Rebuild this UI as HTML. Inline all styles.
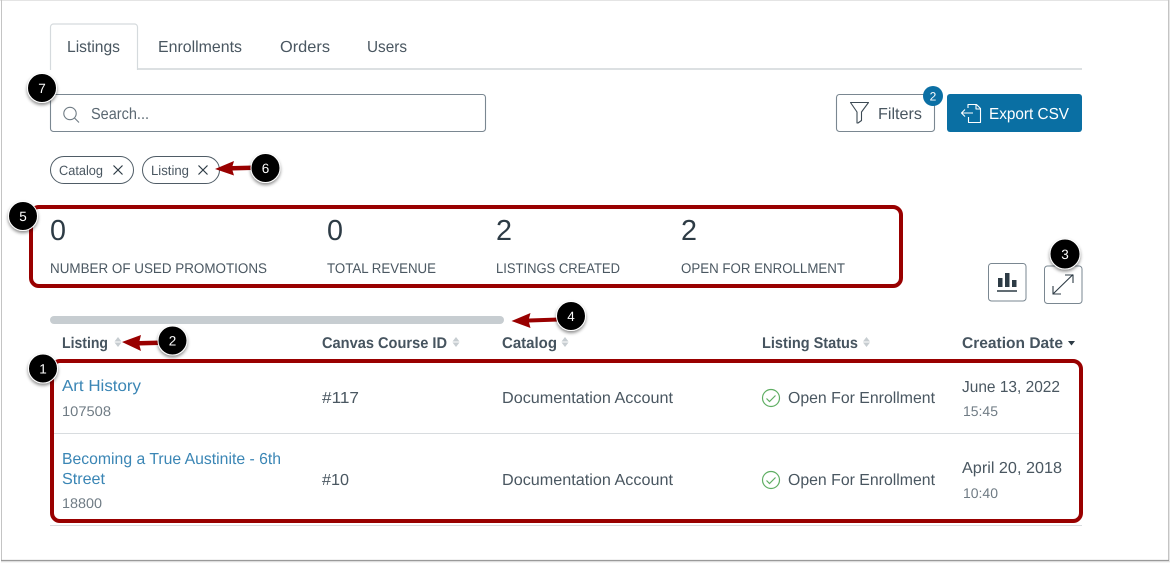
<!DOCTYPE html>
<html lang="en"><head><meta charset="utf-8"><title>Listings</title>
<style>
html,body{margin:0;padding:0;background:#fff;width:1170px;height:563px;overflow:hidden}
svg{display:block;font-family:"Liberation Sans",sans-serif}
text{text-rendering:geometricPrecision}
.t{fill:#2d3b45}
.g{fill:#4a5761}
.m{fill:#6f7b84}
.l{fill:#3b86b5}
.b{font-weight:bold;fill:#46545f}
.n{fill:#fff;font-size:13.5px;text-anchor:middle}
.red{fill:none;stroke:#990000;stroke-width:4}
.ar{fill:#990000}
.s{fill:#c7cdd1}
</style></head><body>
<svg width="1170" height="563" viewBox="0 0 1170 563" xmlns="http://www.w3.org/2000/svg">
<defs><filter id="sh" x="-40%" y="-40%" width="180%" height="180%"><feDropShadow dx="0" dy="2" stdDeviation="1.5" flood-color="#000" flood-opacity=".45"/></filter></defs>
<rect width="1170" height="563" fill="#fff"/>
<!-- frame -->
<path d="M0 .5H1170" stroke="#e4e4e4" stroke-width="1"/>
<path d="M1.500 0V560.500H1168.500V0" fill="none" stroke="#c4c4c4" stroke-width="1"/>
<path d="M1 560.500H1169" stroke="#9a9a9a" stroke-width="1.300"/>
<path d="M1169.500 0V561" stroke="#e6e6e6" stroke-width="1"/>
<path d="M1 561.800H1170" stroke="#dcdcdc" stroke-width="1"/>

<!-- tabs -->
<path d="M50 69H1082" stroke="#c7cdd1" stroke-width="1.2"/>
<path d="M50.500 70V27a3 3 0 0 1 3-3h81a3 3 0 0 1 3 3v43" fill="#fff" stroke="#d5dadd" stroke-width="1.2"/>
<text x="67" y="52" font-size="16" class="g" textLength="53" lengthAdjust="spacingAndGlyphs">Listings</text>
<text x="158" y="52" font-size="16" class="g" textLength="84" lengthAdjust="spacingAndGlyphs">Enrollments</text>
<text x="280" y="52" font-size="16" class="g" textLength="50" lengthAdjust="spacingAndGlyphs">Orders</text>
<text x="367" y="52" font-size="16" class="g" textLength="40" lengthAdjust="spacingAndGlyphs">Users</text>

<!-- search -->
<rect x="50.500" y="94.500" width="435" height="37" rx="3" fill="#fff" stroke="#7a8791" stroke-width="1.1"/>
<circle cx="70" cy="113.500" r="6.200" fill="none" stroke="#6f7b84" stroke-width="1.1"/>
<path d="M74.500 118l4.500 4.500" stroke="#6f7b84" stroke-width="1.1"/>
<text x="91" y="119" font-size="16" fill="#5b6872" textLength="58" lengthAdjust="spacingAndGlyphs">Search...</text>

<!-- chips -->
<rect x="50.500" y="156.500" width="83" height="27" rx="13.500" fill="#fff" stroke="#4f5c66" stroke-width="1"/>
<text x="59" y="175" font-size="13.500" class="g" textLength="44" lengthAdjust="spacingAndGlyphs">Catalog</text>
<path d="M113.500 165.500l9 9m0-9l-9 9" stroke="#2d3b45" stroke-width="1.200" fill="none"/>
<rect x="142.500" y="156.500" width="77" height="27" rx="13.500" fill="#fff" stroke="#4f5c66" stroke-width="1"/>
<text x="151" y="175" font-size="13.500" class="g" textLength="38" lengthAdjust="spacingAndGlyphs">Listing</text>
<path d="M198.500 165.500l9 9m0-9l-9 9" stroke="#2d3b45" stroke-width="1.200" fill="none"/>

<!-- filters / export -->
<rect x="836.500" y="94.500" width="98" height="37" rx="3" fill="#fff" stroke="#7a8791" stroke-width="1.1"/>
<path d="M850.500 102.500h18l-7 9.500v8.500l-3.500 2.500h-1v-11z" fill="none" stroke="#3d4a54" stroke-width="1.100" stroke-linejoin="round"/>
<text x="878" y="119" font-size="16" class="g" textLength="44" lengthAdjust="spacingAndGlyphs">Filters</text>
<circle cx="933" cy="96" r="10" fill="#0b6fa4"/>
<text x="933" y="100.500" font-size="12" fill="#fff" text-anchor="middle">2</text>
<rect x="947" y="94" width="135" height="38" rx="3" fill="#0a6fa3"/>
<path d="M968 108v-3.500h8.500l4 4v14h-12v-5.500M980 109h-4v-4.500M973 113h-11.500M965 109.500l-3.500 3.500 3.500 3.500" fill="none" stroke="#fff" stroke-width="1.100" stroke-linejoin="round"/>
<text x="989" y="119" font-size="16" fill="#fff" textLength="80" lengthAdjust="spacingAndGlyphs">Export CSV</text>

<!-- stats -->
<text x="50" y="240" font-size="29" class="t" textLength="16" lengthAdjust="spacingAndGlyphs">0</text>
<text x="327" y="240" font-size="29" class="t" textLength="16" lengthAdjust="spacingAndGlyphs">0</text>
<text x="496" y="240" font-size="29" class="t" textLength="16" lengthAdjust="spacingAndGlyphs">2</text>
<text x="681" y="240" font-size="29" class="t" textLength="16" lengthAdjust="spacingAndGlyphs">2</text>
<text x="50" y="273" font-size="14" class="g" textLength="217" lengthAdjust="spacingAndGlyphs">NUMBER OF USED PROMOTIONS</text>
<text x="327" y="273" font-size="14" class="g" textLength="109" lengthAdjust="spacingAndGlyphs">TOTAL REVENUE</text>
<text x="496" y="273" font-size="14" class="g" textLength="124" lengthAdjust="spacingAndGlyphs">LISTINGS CREATED</text>
<text x="681" y="273" font-size="14" class="g" textLength="164" lengthAdjust="spacingAndGlyphs">OPEN FOR ENROLLMENT</text>

<!-- icon buttons -->
<rect x="988.500" y="263.500" width="37.500" height="37.500" rx="3" fill="#fff" stroke="#7a8791" stroke-width="1"/>
<path d="M998 278h4.500v9H998zM1005 273h4.500v14H1005zM1012 280h4.500v7H1012z" fill="#2d3b45"/>
<path d="M997 291h20" stroke="#2d3b45" stroke-width="1.400"/>
<rect x="1044.500" y="266" width="37.500" height="37.500" rx="3" fill="#fff" stroke="#7a8791" stroke-width="1"/>
<path d="M1053 294l20-19.500M1065 275h8v8M1053 286v8h8" fill="none" stroke="#2d3b45" stroke-width="1.100"/>

<!-- scrollbar -->
<rect x="50" y="316" width="454" height="8" rx="4" fill="#c7cdd1"/>

<!-- table header -->
<text x="62" y="348" font-size="15.500" class="b" textLength="46" lengthAdjust="spacingAndGlyphs">Listing</text>
<path class="s" d="M118 337l3.500 4.500h-7zM118 347l3.500-4.500h-7z"/>
<text x="322" y="348" font-size="15.500" class="b" textLength="125" lengthAdjust="spacingAndGlyphs">Canvas Course ID</text>
<path class="s" d="M456 337l3.500 4.500h-7zM456 347l3.500-4.500h-7z"/>
<text x="502" y="348" font-size="15.500" class="b" textLength="55" lengthAdjust="spacingAndGlyphs">Catalog</text>
<path class="s" d="M565 337l3.500 4.500h-7zM565 347l3.500-4.500h-7z"/>
<text x="762" y="348" font-size="15.500" class="b" textLength="96" lengthAdjust="spacingAndGlyphs">Listing Status</text>
<path class="s" d="M866.500 337l3.500 4.500h-7zM866.500 347l3.500-4.500h-7z"/>
<text x="962" y="348" font-size="15.500" class="b" textLength="101" lengthAdjust="spacingAndGlyphs">Creation Date</text>
<path d="M1068 341h7l-3.500 4.500z" fill="#2d3b45"/>

<!-- rows -->
<text x="62" y="391" font-size="16" class="l" textLength="79" lengthAdjust="spacingAndGlyphs">Art History</text>
<text x="62" y="416" font-size="14" class="m" textLength="49" lengthAdjust="spacingAndGlyphs">107508</text>
<text x="322" y="403" font-size="16" class="g" textLength="37" lengthAdjust="spacingAndGlyphs">#117</text>
<text x="502" y="403" font-size="16" class="g" textLength="171" lengthAdjust="spacingAndGlyphs">Documentation Account</text>
<circle cx="771" cy="398" r="8.500" fill="none" stroke="#5fae63" stroke-width="1.200"/>
<path d="M766.500 398.500l3 3 6-6" fill="none" stroke="#5fae63" stroke-width="1.200"/>
<text x="788" y="403" font-size="16" class="g" textLength="147" lengthAdjust="spacingAndGlyphs">Open For Enrollment</text>
<text x="962" y="392" font-size="16" class="g" textLength="98" lengthAdjust="spacingAndGlyphs">June 13, 2022</text>
<text x="963" y="416" font-size="14" class="m" textLength="35" lengthAdjust="spacingAndGlyphs">15:45</text>

<path d="M50 433.500H1082" stroke="#d8dcdf" stroke-width="1"/>

<text x="62" y="464" font-size="16" class="l" textLength="219" lengthAdjust="spacingAndGlyphs">Becoming a True Austinite - 6th</text>
<text x="62" y="484" font-size="16" class="l" textLength="43" lengthAdjust="spacingAndGlyphs">Street</text>
<text x="62" y="508" font-size="14" class="m" textLength="40" lengthAdjust="spacingAndGlyphs">18800</text>
<text x="322" y="485" font-size="16" class="g" textLength="27" lengthAdjust="spacingAndGlyphs">#10</text>
<text x="502" y="485" font-size="16" class="g" textLength="171" lengthAdjust="spacingAndGlyphs">Documentation Account</text>
<circle cx="771" cy="480" r="8.500" fill="none" stroke="#5fae63" stroke-width="1.200"/>
<path d="M766.500 480.500l3 3 6-6" fill="none" stroke="#5fae63" stroke-width="1.200"/>
<text x="788" y="485" font-size="16" class="g" textLength="147" lengthAdjust="spacingAndGlyphs">Open For Enrollment</text>
<text x="962" y="473" font-size="16" class="g" textLength="100" lengthAdjust="spacingAndGlyphs">April 20, 2018</text>
<text x="963" y="498" font-size="14" class="m" textLength="35" lengthAdjust="spacingAndGlyphs">10:40</text>
<path d="M50 525.500H1082" stroke="#d8dcdf" stroke-width="1"/>

<!-- red callout boxes -->
<rect class="red" x="31" y="207" width="870" height="79" rx="8"/>
<rect class="red" x="52" y="361" width="1029" height="160" rx="8"/>

<!-- arrows -->
<path class="ar" d="M215 169l19-8-1.500 5 20-.5v4.500l-20 .5 1.500 5z"/>
<path class="ar" d="M122 342l19-7-1.500 6 20-.5v4.500l-20 .5 1.500 5.500z"/>
<path class="ar" d="M511.500 321l19-8-1.500 5.500 30-1v4l-30 1 1.500 5.500z"/>

<!-- numbered badges -->
<g filter="url(#sh)" fill="#000" stroke="#fff" stroke-width="1">
<circle cx="42" cy="88" r="14.500"/>
<circle cx="265.500" cy="168" r="14.500"/>
<circle cx="23" cy="216" r="14.500"/>
<circle cx="1065" cy="254" r="15"/>
<circle cx="571" cy="316" r="14.500"/>
<circle cx="172.500" cy="340.500" r="14.500"/>
<circle cx="43" cy="368.500" r="14.500"/>
</g>
<text x="42" y="93" class="n">7</text>
<text x="265.500" y="173" class="n">6</text>
<text x="23" y="221" class="n">5</text>
<text x="1065" y="259" class="n">3</text>
<text x="571" y="321" class="n">4</text>
<text x="172.500" y="345.500" class="n">2</text>
<text x="43" y="373.500" class="n">1</text>
</svg>
</body></html>
